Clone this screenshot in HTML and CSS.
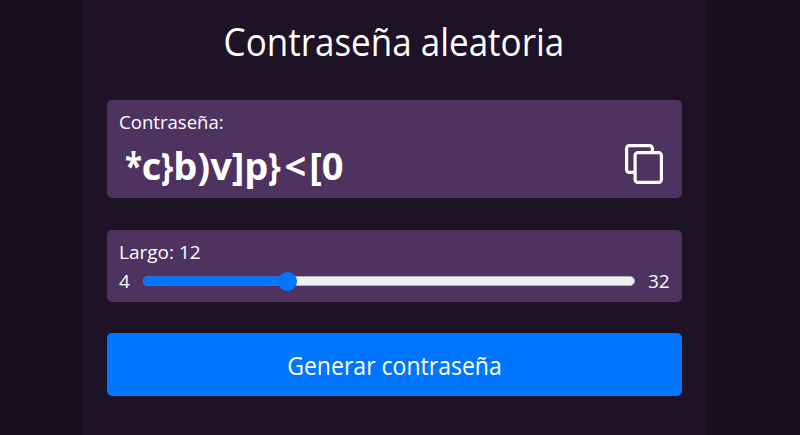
FILE: index.html
```html
<!DOCTYPE html>
<html lang="es">
<head>
<meta charset="utf-8">
<title>Contraseña aleatoria</title>
<link rel="stylesheet" href="styles.css">
</head>
<body>
<main class="app">
  <h1 class="title"><span class="fit fit-title">Contraseña aleatoria</span></h1>
  <section class="card password">
    <div class="label"><span class="fit fit-label">Contraseña:</span></div>
    <div class="password-row">
      <output class="value"><span class="fit star">*</span>c<span class="fit brace">}</span>b)v]p<span class="fit brace-end">}</span><span class="less">&lt;</span>[0</output>
      <button class="copy" aria-label="Copiar">
        <svg width="40" height="42" viewBox="0 0 40 42" fill="none" stroke="currentColor" stroke-width="3.200">
          <rect x="11.100" y="9.600" width="26.300" height="29.800" rx="2.800"/>
          <path d="M11 29.400H5.400a2.800 2.800 0 0 1-2.800-2.800V5.400A2.800 2.800 0 0 1 5.400 2.600H25.600a2.800 2.800 0 0 1 2.800 2.800V9.500"/>
        </svg>
      </button>
    </div>
  </section>
  <section class="card length">
    <div class="label">Largo: 12</div>
    <div class="range-row">
      <span class="min">4</span>
      <div class="track"><div class="fill"></div><div class="thumb"></div></div>
      <span class="max">32</span>
    </div>
  </section>
  <button class="generate"><span class="fit fit-button">Generar contraseña</span></button>
</main>
</body>
</html>
```
FILE: styles.css
```css
* { box-sizing: border-box; }
body {
  margin: 0;
  background: #170f1e;
  color: #fff;
  font-family: "Open Sans", "Noto Sans", sans-serif;
  font-size: 19px;
}
button { font: inherit; color: inherit; border: 0; padding: 0; }
.app {
  width: 625px;
  height: 435px;
  margin-left: 82px;
  padding: 15px 25px 0;
  background: #1e1226;
}
.fit { display: inline-block; white-space: nowrap; }
.fit-title, .fit-button { transform: scaleX(.921); }
.fit-label { transform: scaleX(.978); transform-origin: left; }
.title {
  margin: 0 1px 33px 0;
  height: 52px;
  line-height: 52px;
  font-size: 38px;
  font-weight: 400;
  text-align: center;
}
.card {
  background: #4e3260;
  border-radius: 5px;
  padding: 8px 12px 0;
}
.label { height: 28px; line-height: 28px; }
.password { height: 98px; margin-bottom: 32px; }
.password-row { display: flex; justify-content: space-between; }
.value { padding-left: 6px; line-height: 58px; font-size: 38px; font-weight: 700; }
.star { margin-right: -4px; transform: scaleX(.82); transform-origin: left; }
.brace { margin-right: -3px; transform: scaleX(.82); transform-origin: left; }
.brace-end { transform: scaleX(.85); transform-origin: left; }
.less { margin-left: 1px; letter-spacing: 3px; }
.copy { display: block; height: 42px; margin: 7px 6px 0 0; background: none; }
.copy svg { display: block; }
.length { height: 72px; margin-bottom: 31px; }
.range-row { display: flex; align-items: center; height: 30px; }
.min { width: 24px; }
.max { width: 22px; margin-left: 13px; }
.track {
  position: relative;
  flex: 1;
  height: 10px;
  border-radius: 5px;
  background: #efefef;
  border: 1px solid #b2b2b2;
}
.fill { width: calc(30% + 2px); height: 10px; margin: -1px; border-radius: 5px; background: #0075ff; border: 1px solid #2e71d0; }
.thumb {
  position: absolute;
  left: 134px;
  top: -5.5px;
  width: 19px;
  height: 19px;
  border-radius: 50%;
  background: #0075ff;
}
.generate {
  display: block;
  width: 100%;
  height: 63px;
  padding: 1px 1px 0 0;
  border-radius: 5px;
  background: #0075ff;
  font-size: 25px;
}
```
